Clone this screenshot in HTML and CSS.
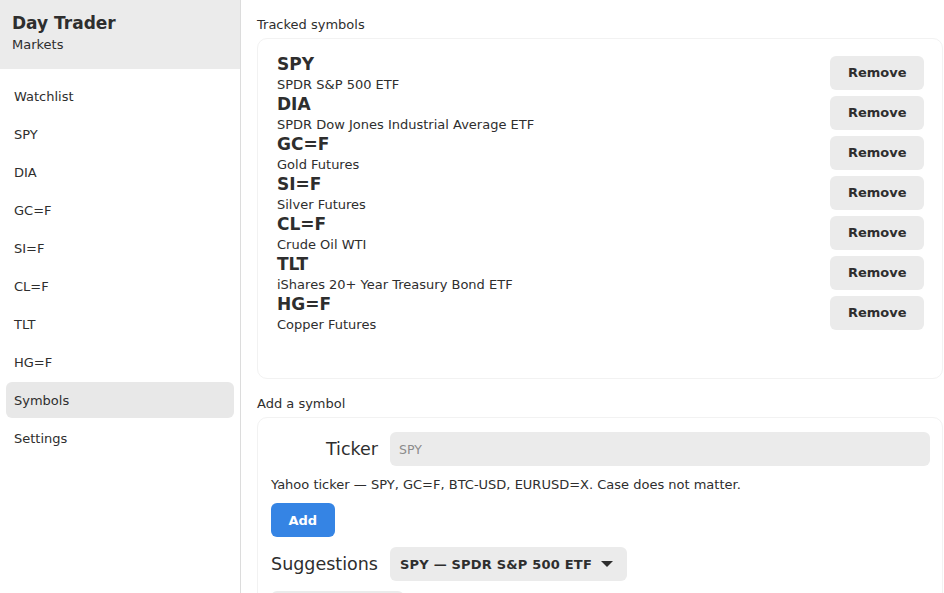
FILE: index.html
```html
<!DOCTYPE html>
<html lang="en">
<head>
<meta charset="utf-8">
<title>Day Trader — Symbols</title>
<link rel="stylesheet" href="styles.css">
</head>
<body>
<div class="app">
  <aside class="sidebar">
    <div class="brand">
      <div class="brand-title">Day Trader</div>
      <div class="brand-sub">Markets</div>
    </div>
    <nav class="nav">
      <div class="nav-item">Watchlist</div>
      <div class="nav-item">SPY</div>
      <div class="nav-item">DIA</div>
      <div class="nav-item">GC=F</div>
      <div class="nav-item">SI=F</div>
      <div class="nav-item">CL=F</div>
      <div class="nav-item">TLT</div>
      <div class="nav-item">HG=F</div>
      <div class="nav-item active">Symbols</div>
      <div class="nav-item">Settings</div>
    </nav>
  </aside>
  <main class="main">
    <div class="section-title">Tracked symbols</div>
    <div class="card tracked">
      <div class="row">
        <div class="info"><div class="sym">SPY</div><div class="desc">SPDR S&amp;P 500 ETF</div></div>
        <button class="btn">Remove</button>
      </div>
      <div class="row">
        <div class="info"><div class="sym">DIA</div><div class="desc">SPDR Dow Jones Industrial Average ETF</div></div>
        <button class="btn">Remove</button>
      </div>
      <div class="row">
        <div class="info"><div class="sym">GC=F</div><div class="desc">Gold Futures</div></div>
        <button class="btn">Remove</button>
      </div>
      <div class="row">
        <div class="info"><div class="sym">SI=F</div><div class="desc">Silver Futures</div></div>
        <button class="btn">Remove</button>
      </div>
      <div class="row">
        <div class="info"><div class="sym">CL=F</div><div class="desc">Crude Oil WTI</div></div>
        <button class="btn">Remove</button>
      </div>
      <div class="row">
        <div class="info"><div class="sym">TLT</div><div class="desc">iShares 20+ Year Treasury Bond ETF</div></div>
        <button class="btn">Remove</button>
      </div>
      <div class="row">
        <div class="info"><div class="sym">HG=F</div><div class="desc">Copper Futures</div></div>
        <button class="btn">Remove</button>
      </div>
    </div>
    <div class="section-title">Add a symbol</div>
    <div class="card add">
      <div class="field">
        <label class="field-label">Ticker</label>
        <input class="input" type="text" placeholder="SPY">
      </div>
      <div class="hint">Yahoo ticker — SPY, GC=F, BTC-USD, EURUSD=X. Case does not matter.</div>
      <div><button class="btn primary">Add</button></div>
      <div class="field">
        <label class="field-label">Suggestions</label>
        <div class="select"><span>SPY — SPDR S&amp;P 500 ETF</span><span class="caret"></span></div>
      </div>
      <div><button class="btn wide">Add selected</button></div>
    </div>
  </main>
</div>
</body>
</html>
```

FILE: styles.css
```css
* { box-sizing: border-box; }
html, body {
  margin: 0;
  height: 100%;
  overflow: hidden;
  background: #fff;
}
body {
  font-family: "DejaVu Sans", "Liberation Sans", sans-serif;
  color: #2e2e2e;
}
.app {
  display: flex;
  height: 593px;
}
.sidebar {
  width: 241px;
  flex: 0 0 241px;
  border-right: 1px solid #dcdcdc;
  background: #fff;
}
.brand {
  background: #ebebeb;
  padding: 13px 12px 16px;
}
.brand-title {
  font-size: 17px;
  font-weight: bold;
  line-height: 20px;
  margin-bottom: 4px;
}
.brand-sub {
  font-size: 13px;
  line-height: 16px;
}
.nav {
  display: flex;
  flex-direction: column;
  gap: 2px;
  padding: 9px 6px;
}
.nav-item {
  height: 36px;
  display: flex;
  align-items: center;
  padding-left: 8px;
  font-size: 13px;
  border-radius: 6px;
}
.nav-item.active { background: #e8e8e8; }
.main {
  flex: 1;
  padding: 16px 1px 0 16px;
  overflow: hidden;
}
.section-title {
  font-size: 13px;
  line-height: 17px;
  margin-bottom: 5px;
}
.card {
  border: 1px solid #f2f2f2;
  border-radius: 10px;
  background: #fff;
}
.tracked {
  padding: 15px 18px 44px 19px;
  margin-bottom: 16px;
}
.row {
  display: flex;
  align-items: center;
  justify-content: space-between;
  height: 40px;
}
.sym {
  font-size: 17px;
  font-weight: bold;
  line-height: 21px;
}
.desc {
  font-size: 13px;
  line-height: 19px;
}
.btn {
  font-family: inherit;
  font-size: 13px;
  font-weight: bold;
  color: #2e2e2e;
  background: #ebebeb;
  border: none;
  border-radius: 6px;
  height: 34px;
  padding: 0 17.5px;
  margin-top: -3px;
}
.btn.primary {
  background: #3584e4;
  color: #fff;
}
.add {
  padding: 14px 12px 14px 13px;
  display: flex;
  flex-direction: column;
  gap: 10px;
}
.add .btn { height: 34px; margin-top: 0; }
.add .btn.wide { padding: 0 19px; }
.field {
  display: flex;
  align-items: center;
  gap: 12px;
}
.field-label {
  width: 107px;
  flex: 0 0 107px;
  text-align: right;
  font-size: 17.5px;
}
.input {
  flex: 1;
  height: 34px;
  border: none;
  border-radius: 6px;
  background: #ebebeb;
  padding: 0 9px;
  font-family: inherit;
  font-size: 12.5px;
  color: #2e2e2e;
  outline: none;
}
.input::placeholder { color: #8c8c8c; }
.hint {
  font-size: 13px;
  line-height: 17px;
}
.select {
  display: flex;
  align-items: center;
  gap: 9px;
  height: 34px;
  padding: 0 14px 0 10px;
  background: #ebebeb;
  border-radius: 6px;
  font-size: 13px;
  font-weight: bold;
  letter-spacing: 0.2px;
}
.caret {
  width: 0;
  height: 0;
  border-left: 6px solid transparent;
  border-right: 6px solid transparent;
  border-top: 6px solid #2e2e2e;
}
```
